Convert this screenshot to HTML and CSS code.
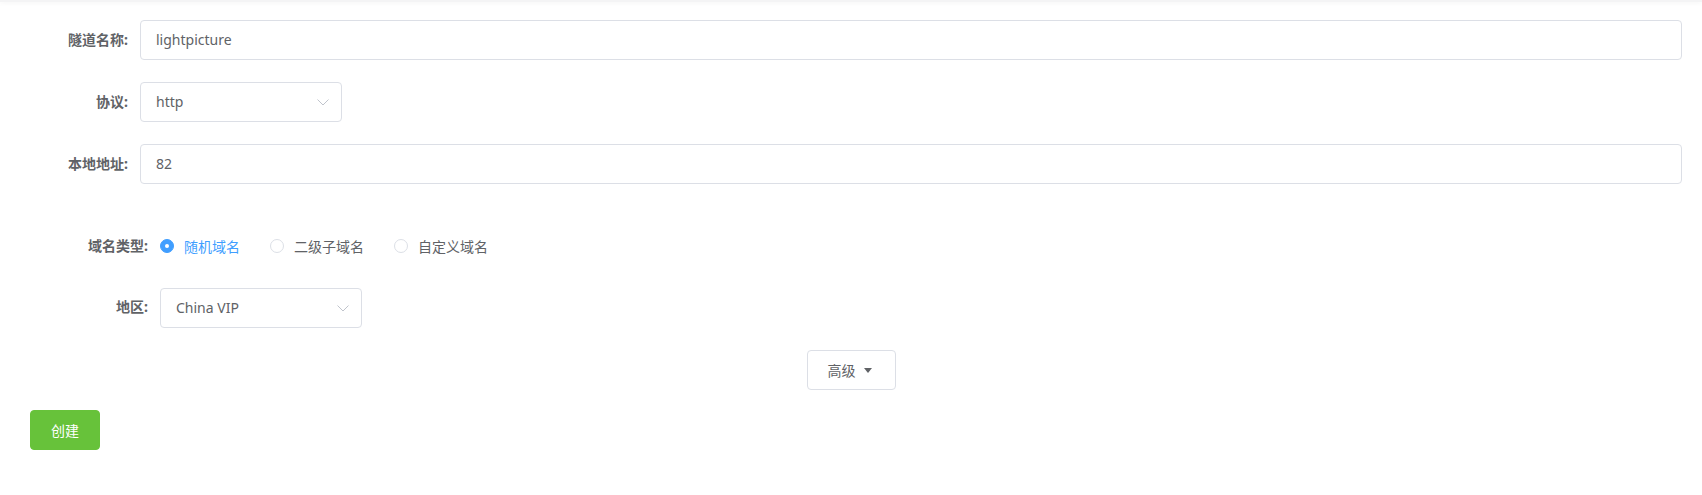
FILE: index.html
```html
<!DOCTYPE html>
<html lang="zh-CN">
<head>
    <meta charset="UTF-8">
    <meta name="viewport" content="width=device-width, initial-scale=1.0">
    <title>创建隧道</title>
    <link rel="stylesheet" href="styles.css">
</head>
<body>
    <div class="topbar"></div>

    <div class="page">
        <form class="form form-basic">
            <div class="form-item">
                <label class="form-label">隧道名称:</label>
                <div class="form-content">
                    <div class="input">lightpicture</div>
                </div>
            </div>
            <div class="form-item">
                <label class="form-label">协议:</label>
                <div class="form-content">
                    <div class="input select">
                        <span>http</span>
                        <svg class="chevron" width="12" height="7" viewBox="0 0 12 7"><path d="M0.5 0.5 L6 6 L11.5 0.5" fill="none" stroke="#c0c4cc" stroke-width="1"/></svg>
                    </div>
                </div>
            </div>
            <div class="form-item">
                <label class="form-label">本地地址:</label>
                <div class="form-content">
                    <div class="input">82</div>
                </div>
            </div>
        </form>

        <form class="form form-domain">
            <div class="form-item">
                <label class="form-label">域名类型:</label>
                <div class="form-content radio-group">
                    <span class="radio is-checked"><span class="radio-dot"></span><span class="radio-text">随机域名</span></span>
                    <span class="radio"><span class="radio-dot"></span><span class="radio-text">二级子域名</span></span>
                    <span class="radio"><span class="radio-dot"></span><span class="radio-text">自定义域名</span></span>
                </div>
            </div>
            <div class="form-item">
                <label class="form-label">地区:</label>
                <div class="form-content">
                    <div class="input select">
                        <span>China VIP</span>
                        <svg class="chevron" width="12" height="7" viewBox="0 0 12 7"><path d="M0.5 0.5 L6 6 L11.5 0.5" fill="none" stroke="#c0c4cc" stroke-width="1"/></svg>
                    </div>
                </div>
            </div>
        </form>

        <div class="advanced-row">
            <button class="btn">高级<span class="caret"></span></button>
        </div>

        <div class="actions">
            <button class="btn btn-success">创建</button>
        </div>
    </div>
</body>
</html>
```

FILE: styles.css
```css
* {
  margin: 0;
  padding: 0;
  box-sizing: border-box;
}

body {
  font-family: "Noto Sans", "Noto Sans CJK SC", sans-serif;
  font-size: 14px;
  color: #606266;
  background-color: #fff;
}

/* header shadow peeking in at the top */
.topbar {
  height: 2px;
  background: #f4f4f5;
  box-shadow: 0 1px 4px rgba(0, 0, 0, 0.06);
}

.page {
  display: flex;
  flex-direction: column;
  padding-top: 18px;
}

.form {
  display: flex;
  flex-direction: column;
  padding-right: 20px;
}

.form-basic {
  gap: 22px;
}

.form-domain {
  gap: 21px;
  margin-top: 43px;
}

.form-item {
  display: flex;
  height: 40px;
}

.form-label {
  flex: none;
  width: 140px;
  padding-right: 12px;
  text-align: right;
  line-height: 40px;
  font-weight: 700;
  color: #606266;
}

.form-domain .form-label {
  width: 160px;
  line-height: 38px;
}

.form-content {
  flex: 1;
  display: flex;
  align-items: center;
}

.input {
  width: 100%;
  height: 40px;
  line-height: 38px;
  padding: 0 15px;
  border: 1px solid #dcdfe6;
  border-radius: 4px;
  color: #606266;
}

.select {
  width: 202px;
  display: flex;
  align-items: center;
  justify-content: space-between;
  padding-right: 12px;
}

.chevron {
  display: block;
}

/* radios */
.radio-group {
  gap: 30px;
  padding-bottom: 2px;
}

.radio {
  display: flex;
  align-items: center;
  color: #606266;
}

.radio-dot {
  width: 14px;
  height: 14px;
  border: 1px solid #dcdfe6;
  border-radius: 50%;
  background: #fff;
  position: relative;
}

.radio-text {
  padding-left: 10px;
}

.radio.is-checked .radio-dot {
  border-color: #409eff;
  background: #409eff;
}

.radio.is-checked .radio-dot::after {
  content: "";
  position: absolute;
  left: 50%;
  top: 50%;
  width: 4px;
  height: 4px;
  margin: -2px 0 0 -2px;
  border-radius: 50%;
  background: #fff;
}

.radio.is-checked .radio-text {
  color: #409eff;
}

/* buttons */
.btn {
  font-family: inherit;
  font-size: 14px;
  height: 40px;
  padding: 0 20px;
  border: 1px solid #dcdfe6;
  border-radius: 4px;
  background: #fff;
  color: #606266;
  cursor: pointer;
  display: inline-flex;
  align-items: center;
}

.advanced-row {
  display: flex;
  justify-content: center;
  margin-top: 22px;
}

.caret {
  width: 14px;
  margin-left: 5px;
  display: inline-flex;
  justify-content: center;
}

.caret::before {
  content: "";
  border-left: 4px solid transparent;
  border-right: 4px solid transparent;
  border-top: 5px solid #606266;
}

.actions {
  margin-top: 20px;
  padding-left: 30px;
}

.btn-success {
  background: #67c23a;
  border-color: #67c23a;
  color: #fff;
}
```
